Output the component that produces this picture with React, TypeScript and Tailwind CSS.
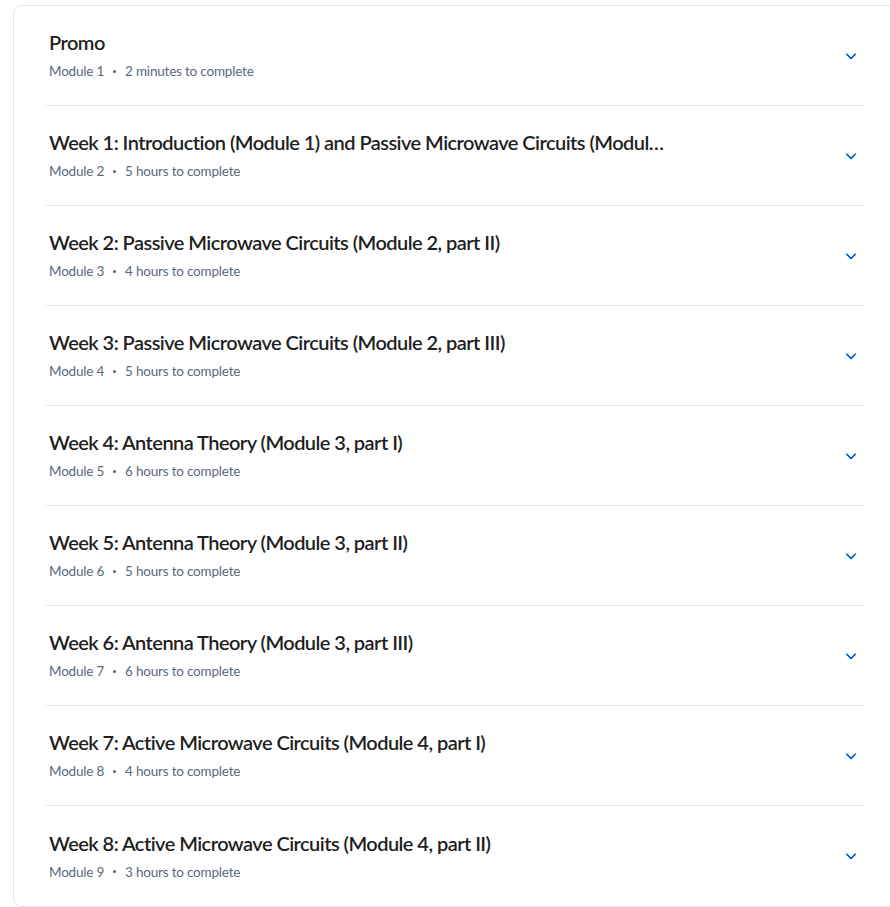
import React from 'react';

interface ModuleRow {
  title: string;
  module: number;
  duration: string;
}

const modules: ModuleRow[] = [
  { title: 'Promo', module: 1, duration: '2 minutes to complete' },
  { title: 'Week 1: Introduction (Module 1) and Passive Microwave Circuits (Module 2, part I)', module: 2, duration: '5 hours to complete' },
  { title: 'Week 2: Passive Microwave Circuits (Module 2, part II)', module: 3, duration: '4 hours to complete' },
  { title: 'Week 3: Passive Microwave Circuits (Module 2, part III)', module: 4, duration: '5 hours to complete' },
  { title: 'Week 4: Antenna Theory (Module 3, part I)', module: 5, duration: '6 hours to complete' },
  { title: 'Week 5: Antenna Theory (Module 3, part II)', module: 6, duration: '5 hours to complete' },
  { title: 'Week 6: Antenna Theory (Module 3, part III)', module: 7, duration: '6 hours to complete' },
  { title: 'Week 7: Active Microwave Circuits (Module 4, part I)', module: 8, duration: '4 hours to complete' },
  { title: 'Week 8: Active Microwave Circuits (Module 4, part II)', module: 9, duration: '3 hours to complete' },
];

const Chevron = () => (
  <svg className="w-4 h-4 text-[#0056d2]" viewBox="0 0 16 16" fill="none" stroke="currentColor">
    <path d="M3.75 6.25l4.25 4.25 4.25-4.25" strokeWidth={1.7} strokeLinecap="round" strokeLinejoin="round" />
  </svg>
);

const ModuleItem: React.FC<{ row: ModuleRow; last: boolean }> = ({ row, last }) => (
  <div className={`flex items-center h-[100px] ${last ? '' : 'border-b border-[#e3e5ea]'}`}>
    <div className="flex-1 min-w-0 pl-[3px]">
      <h3 className="max-w-[623px] truncate text-[20px] leading-[24px] font-semibold tracking-[-0.55px] text-[#1f1f1f]">{row.title}</h3>
      <div className="mt-[7px] flex items-center text-[13.5px] leading-[20px] tracking-[-0.2px] text-[#5b6780]">
        <span>Module {row.module}</span>
        <span className="mx-[9px] w-[3px] h-[3px] rounded-full bg-[#5b6780]" />
        <span>{row.duration}</span>
      </div>
    </div>
    <button className="w-6 h-6 mr-[1px] flex items-center justify-center">
      <Chevron />
    </button>
  </div>
);

export default function App() {
  return (
    <div className="w-[890px] h-[907px] overflow-hidden bg-white pl-[13px] pt-[5px]" style={{ fontFamily: 'Lato, "Noto Sans", sans-serif' }}>
      <div className="w-[884px] border border-[#e3e5ea] rounded-lg px-8">
        {modules.map((m, i) => (
          <ModuleItem key={m.module} row={m} last={i === modules.length - 1} />
        ))}
      </div>
    </div>
  );
}
